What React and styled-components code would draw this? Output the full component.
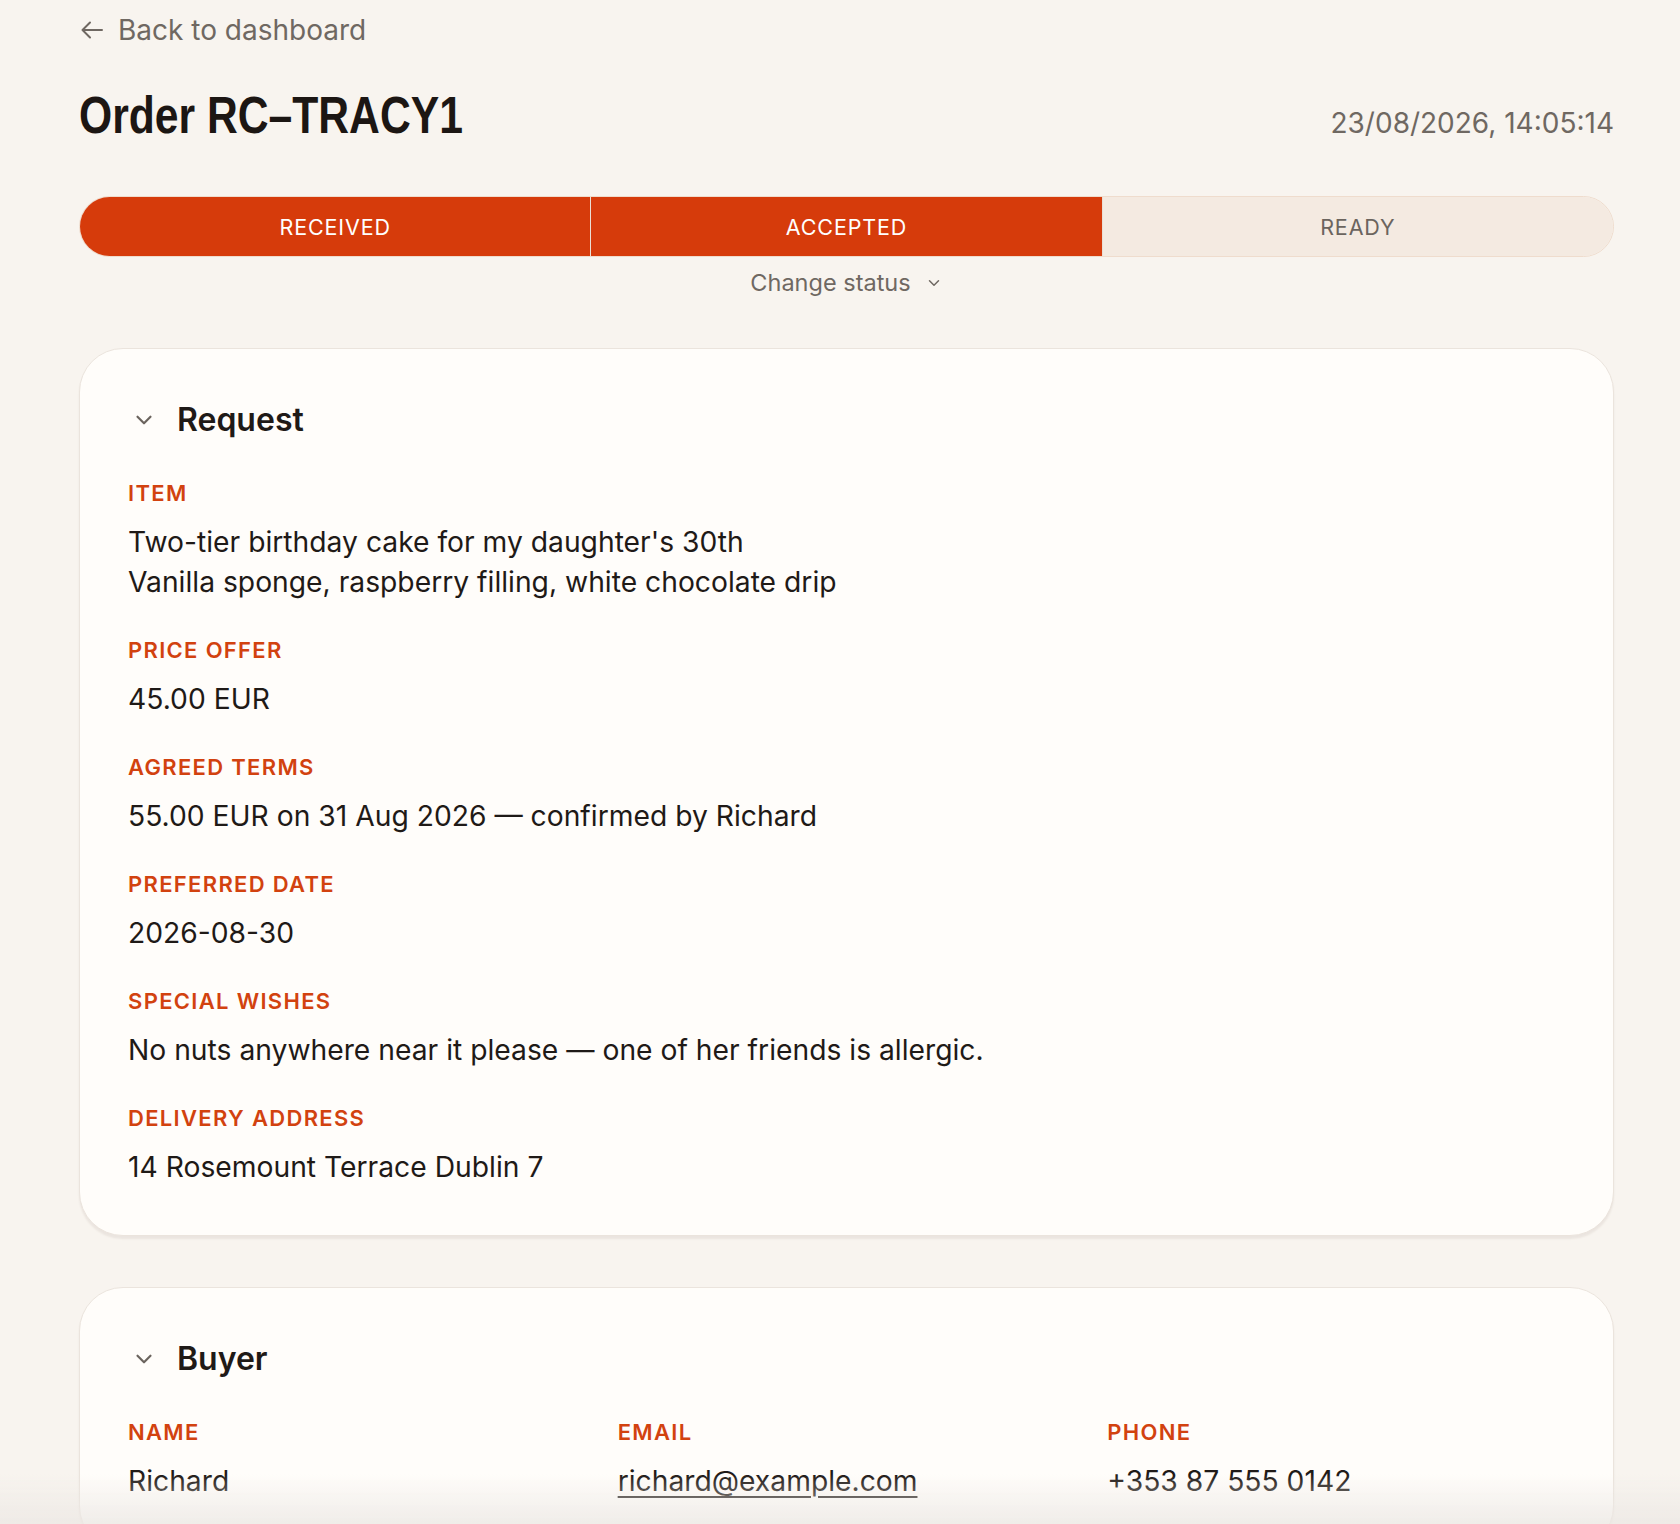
import React from "react";
import styled, { createGlobalStyle } from "styled-components";
import { ChevronDown } from "lucide-react";

const GlobalStyle = createGlobalStyle`
  html, body {
    margin: 0;
    padding: 0;
    background: #f8f4ef;
  }
  body {
    font-family: Inter, "Noto Sans", sans-serif;
    color: #1f1a17;
  }
`;

const Page = styled.div`
  padding: 12px 66px 120px 79px;
  min-height: 1524px;
  box-sizing: border-box;
`;

const BackLink = styled.a`
  display: inline-flex;
  align-items: center;
  gap: 15px;
  font-size: 28px;
  line-height: 36px;
  color: #6f6862;
  text-decoration: none;
  cursor: pointer;
  svg {
    margin-left: 2px;
  }
`;

const Header = styled.div`
  display: flex;
  justify-content: space-between;
  align-items: baseline;
  margin-top: 37px;
`;

const Title = styled.h1`
  margin: 0;
  font-family: "Liberation Sans", Arial, sans-serif;
  font-weight: 700;
  font-size: 52px;
  line-height: 60px;
  color: #1c1613;
`;

/* the original face is a narrow grotesque; squeeze Liberation Sans to its width */
const Narrow = styled.span`
  display: inline-block;
  transform: scaleX(0.82);
  transform-origin: left center;
  margin-right: -18%;
`;

const Stamp = styled.div`
  font-size: 28px;
  color: #6f6862;
`;

const StatusBar = styled.div`
  display: flex;
  margin-top: 51px;
  height: 61px;
  border-radius: 999px;
  overflow: hidden;
  border: 1px solid #efdccd;
  box-sizing: border-box;
`;

const Segment = styled.div`
  flex: 1;
  display: flex;
  align-items: center;
  justify-content: center;
  font-size: 21.5px;
  letter-spacing: 0.04em;
  text-transform: uppercase;
  color: ${p => (p.$active ? "#fff" : "#6b645e")};
  background: ${p => (p.$active ? "#d63b0b" : "#f4eae1")};
  & + & {
    border-left: 1px solid ${p => (p.$active ? "rgba(255,255,255,0.85)" : "#eadfd5")};
  }
`;

const ChangeStatus = styled.button`
  display: flex;
  align-items: center;
  gap: 14px;
  margin: 10px auto 0;
  background: none;
  border: 0;
  padding: 0;
  font-family: inherit;
  font-size: 23.5px;
  line-height: 32px;
  color: #6f6862;
  cursor: pointer;
`;

const Card = styled.section`
  margin-top: ${p => p.$gap}px;
  background: #fffdfa;
  border: 1px solid #ebe4dd;
  border-radius: 44px;
  box-shadow: 0 3px 2px rgba(90, 70, 50, 0.08);
  padding: 51px 48px 48px;
`;

const CardHead = styled.div`
  display: flex;
  align-items: center;
  gap: 20px;
  margin-left: 3px;
  color: #6b645e;
`;

const CardTitle = styled.h2`
  margin: 0;
  font-size: 32px;
  line-height: 40px;
  font-weight: 600;
  color: #1f1a17;
`;

const Fields = styled.div`
  display: flex;
  flex-direction: column;
  gap: 34px;
  margin-top: 39px;
`;

const Columns = styled.div`
  display: grid;
  grid-template-columns: repeat(3, 1fr);
  gap: 32px;
  margin-top: 39px;
`;

const Field = styled.div`
  display: flex;
  flex-direction: column;
  gap: 15px;
`;

const Label = styled.div`
  font-size: 22px;
  line-height: 28px;
  font-weight: 600;
  letter-spacing: 0.06em;
  color: #d2420f;
`;

const Value = styled.div`
  font-size: 28.25px;
  line-height: 40px;
  color: #1f1a17;
`;

const Mail = styled.a`
  color: #1f1a17;
  text-decoration: underline;
  text-underline-offset: 5px;
  text-decoration-thickness: 2px;
`;

const Fade = styled.div`
  position: fixed;
  left: 0;
  right: 0;
  bottom: 0;
  height: 50px;
  pointer-events: none;
  background: linear-gradient(to bottom, rgba(240, 236, 232, 0), rgba(236, 232, 228, 0.8));
`;

const BackArrow = () => (
  <svg width="22" height="18" viewBox="0 0 22 18" fill="none" stroke="currentColor"
    strokeWidth="2" strokeLinecap="round" strokeLinejoin="round">
    <path d="M9 1.5 1.5 9 9 16.5M1.5 9H21" />
  </svg>
);

const steps = [
  { name: "Received", done: true },
  { name: "Accepted", done: true },
  { name: "Ready", done: false }
];

const request = [
  { label: "Item", value: ["Two-tier birthday cake for my daughter's 30th", "Vanilla sponge, raspberry filling, white chocolate drip"] },
  { label: "Price offer", value: ["45.00 EUR"] },
  { label: "Agreed terms", value: ["55.00 EUR on 31 Aug 2026 — confirmed by Richard"] },
  { label: "Preferred date", value: ["2026-08-30"] },
  { label: "Special wishes", value: ["No nuts anywhere near it please — one of her friends is allergic."] },
  { label: "Delivery address", value: ["14 Rosemount Terrace Dublin 7"] }
];

const App = () => {
  return (
    <Page>
      <GlobalStyle />
      <BackLink>
        <BackArrow />
        Back to dashboard
      </BackLink>
      <Header>
        <Title>
          <Narrow>Order RC–TRACY1</Narrow>
        </Title>
        <Stamp>23/08/2026, 14:05:14</Stamp>
      </Header>

      <StatusBar>
        {steps.map(s => (
          <Segment key={s.name} $active={s.done}>
            {s.name}
          </Segment>
        ))}
      </StatusBar>
      <ChangeStatus>
        Change status
        <ChevronDown size={18} strokeWidth={2} />
      </ChangeStatus>

      <Card $gap={49}>
        <CardHead>
          <ChevronDown size={26} strokeWidth={2} />
          <CardTitle>Request</CardTitle>
        </CardHead>
        <Fields>
          {request.map(f => (
            <Field key={f.label}>
              <Label>{f.label.toUpperCase()}</Label>
              <Value>
                {f.value.map(line => (
                  <div key={line}>{line}</div>
                ))}
              </Value>
            </Field>
          ))}
        </Fields>
      </Card>

      <Card $gap={51}>
        <CardHead>
          <ChevronDown size={26} strokeWidth={2} />
          <CardTitle>Buyer</CardTitle>
        </CardHead>
        <Columns>
          <Field>
            <Label>NAME</Label>
            <Value>Richard</Value>
          </Field>
          <Field>
            <Label>EMAIL</Label>
            <Value>
              <Mail href="mailto:richard@example.com">richard@example.com</Mail>
            </Value>
          </Field>
          <Field>
            <Label>PHONE</Label>
            <Value>+353 87 555 0142</Value>
          </Field>
        </Columns>
      </Card>
      <Fade />
    </Page>
  );
};

export default App;
